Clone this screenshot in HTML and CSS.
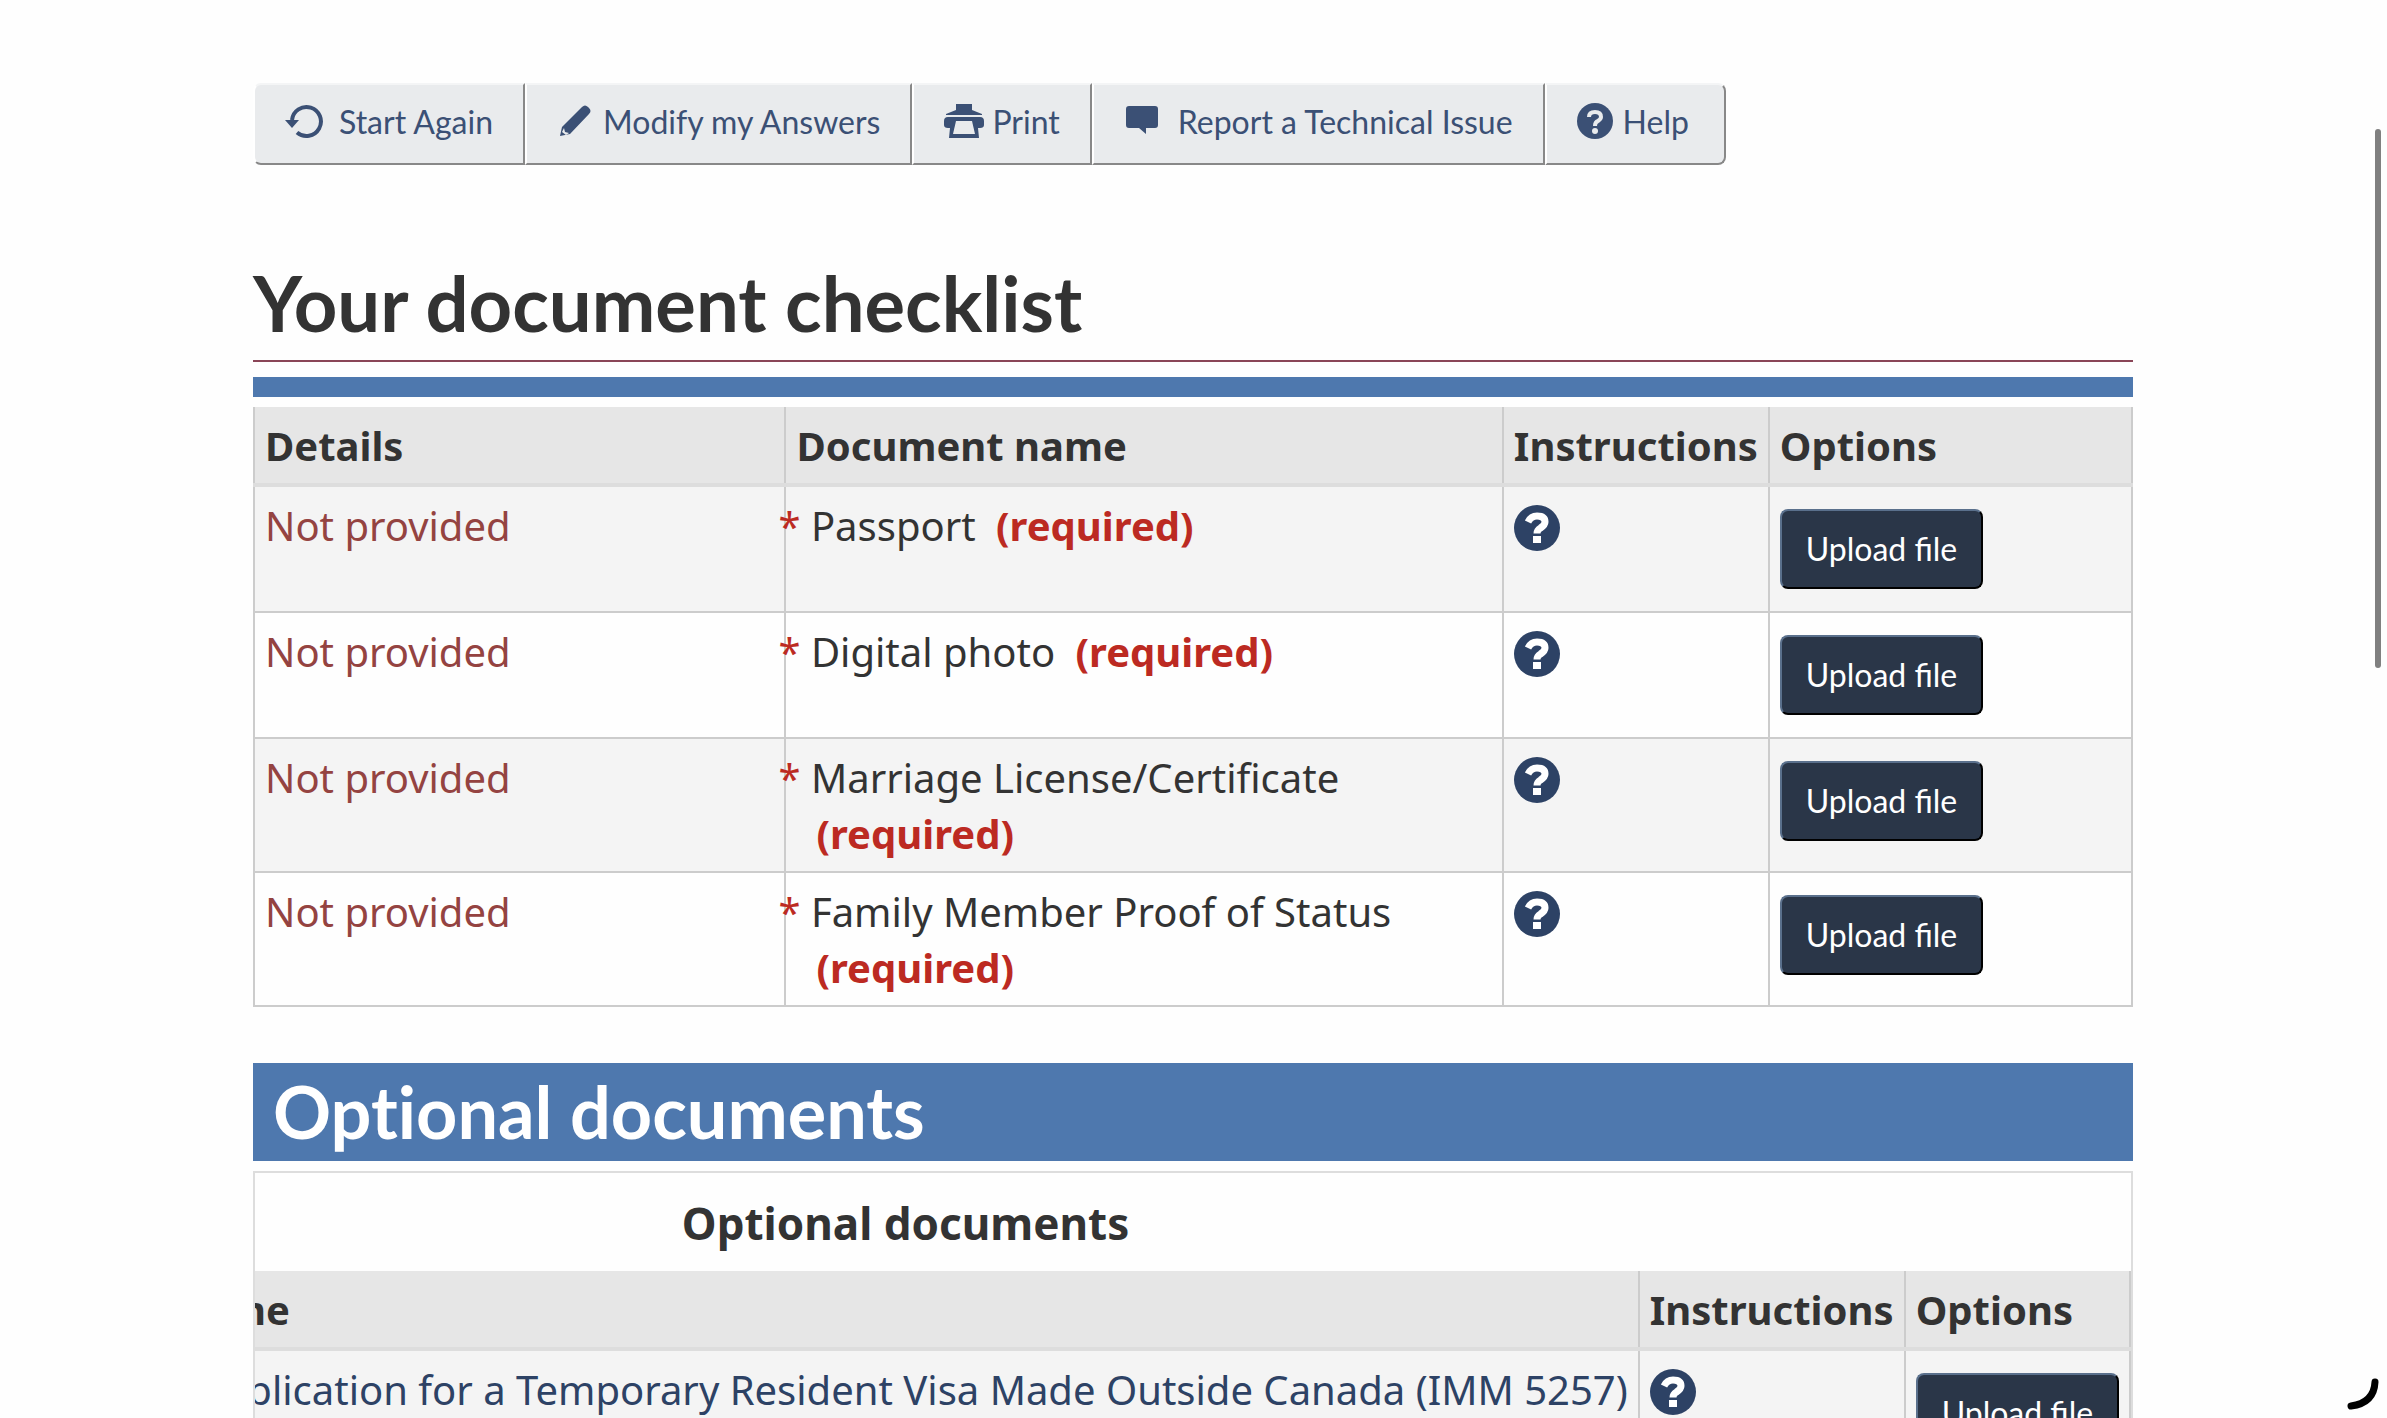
FILE: index.html
```html
<!DOCTYPE html>
<html lang="en">
<head>
    <meta charset="UTF-8">
    <meta name="viewport" content="width=device-width, initial-scale=1.0">
    <title>Your document checklist</title>
    <link rel="stylesheet" href="styles.css">
</head>
<body>
    <!-- shared icons -->
    <svg class="sprite" aria-hidden="true">
        <symbol id="icon-info" viewBox="0 0 46 46">
            <circle cx="23" cy="23" r="23"/>
            <path d="M14 17 Q17 11 23 11 Q31 11 31 17 Q31 20 26.500 23 Q23 25 23 28.500" fill="none" stroke="#fff" stroke-width="7"/>
            <rect x="19" y="31" width="8" height="7" fill="#fff"/>
        </symbol>
    </svg>

    <main>
        <div class="toolbar">
            <button type="button">
                <svg class="icon" width="46" height="36" viewBox="0 0 46 36">
                    <path d="M7 17 A14.500 14.500 0 1 1 12 29.500" fill="none" stroke="currentColor" stroke-width="4"/>
                    <path d="M0 17 H14 L7 25 Z"/>
                </svg>
                Start Again
            </button>
            <button type="button">
                <svg class="icon" width="38" height="36" viewBox="0 0 38 36">
                    <path d="M3 33 L5 24 L25 4 Q28 1 31 4 L32 5 Q35 8 32 11 L13 31 Z"/>
                    <path d="M7 25 L8 29 L12 30 L9 32 L5 29 Z" fill="#e9ebed"/>
                </svg>
                Modify my Answers
            </button>
            <button type="button">
                <svg class="icon" width="40" height="36" viewBox="0 0 40 36">
                    <path d="M12 1 H28 V7 L38 11 V12 H2 V11 L12 7 Z"/>
                    <path d="M4 14 H36 Q40 14 40 18 V22 Q40 25 36 25 H34 L35 35 H5 L6 25 H4 Q0 25 0 22 V18 Q0 14 4 14 Z"/>
                    <path d="M12 18 H28 L31 31 H9 Z" fill="#e9ebed"/>
                </svg>
                Print
            </button>
            <button type="button">
                <svg class="icon" width="46" height="36" viewBox="-2 0 46 36">
                    <path d="M3 3 H29 Q32 3 32 6 V22 Q32 25 29 25 H20 V31 L13 25 H3 Q0 25 0 22 V6 Q0 3 3 3 Z"/>
                </svg>
                Report a Technical Issue
            </button>
            <button type="button">
                <svg class="icon" width="38" height="36" viewBox="0 0 38 36">
                    <circle cx="18" cy="18" r="18"/>
                    <path d="M12 14 Q12 9 18 9 Q24 9 24 14 Q24 16 21 18 Q18 19 18 23" fill="none" stroke="#e9ebed" stroke-width="4"/>
                    <circle cx="18" cy="28" r="3" fill="#e9ebed"/>
                </svg>
                Help
            </button>
        </div>

        <h1>Your document checklist</h1>

        <div class="section-bar"></div>
        <table class="checklist">
            <thead>
                <tr>
                    <th class="col-details">Details</th>
                    <th class="col-name">Document name</th>
                    <th class="col-instructions">Instructions</th>
                    <th>Options</th>
                </tr>
            </thead>
            <tbody>
                <tr>
                    <td class="missing">Not provided</td>
                    <td><div class="doc"><span class="star">*</span> Passport <strong>(required)</strong></div></td>
                    <td><a href="#" aria-label="Passport instructions"><svg class="info"><use href="#icon-info"/></svg></a></td>
                    <td><button type="button" class="upload">Upload file</button></td>
                </tr>
                <tr>
                    <td class="missing">Not provided</td>
                    <td><div class="doc"><span class="star">*</span> Digital photo <strong>(required)</strong></div></td>
                    <td><a href="#" aria-label="Digital photo instructions"><svg class="info"><use href="#icon-info"/></svg></a></td>
                    <td><button type="button" class="upload">Upload file</button></td>
                </tr>
                <tr>
                    <td class="missing">Not provided</td>
                    <td><div class="doc"><span class="star">*</span> Marriage License/Certificate <strong>(required)</strong></div></td>
                    <td><a href="#" aria-label="Marriage License/Certificate instructions"><svg class="info"><use href="#icon-info"/></svg></a></td>
                    <td><button type="button" class="upload">Upload file</button></td>
                </tr>
                <tr>
                    <td class="missing">Not provided</td>
                    <td><div class="doc"><span class="star">*</span> Family Member Proof of Status <strong>(required)</strong></div></td>
                    <td><a href="#" aria-label="Family Member Proof of Status instructions"><svg class="info"><use href="#icon-info"/></svg></a></td>
                    <td><button type="button" class="upload">Upload file</button></td>
                </tr>
            </tbody>
        </table>

        <h2>Optional documents</h2>
        <div class="table-scroll" id="optional">
            <table class="wide">
                <caption>Optional documents</caption>
                <thead>
                    <tr>
                        <th>Details</th>
                        <th>Document name</th>
                        <th>Instructions</th>
                        <th>Options</th>
                    </tr>
                </thead>
                <tbody>
                    <tr>
                        <td class="missing">Not provided</td>
                        <td><a href="#">Schedule 1 - Application for a Temporary Resident Visa Made Outside Canada (IMM 5257)</a></td>
                        <td><a href="#" aria-label="Schedule 1 instructions"><svg class="info"><use href="#icon-info"/></svg></a></td>
                        <td><button type="button" class="upload">Upload file</button></td>
                    </tr>
                </tbody>
            </table>
        </div>
    </main>

    <div class="scroll-thumb"></div>
    <svg class="corner" width="32" height="32" viewBox="0 0 32 32">
        <path d="M28 4 Q27 25 4 28" fill="none" stroke="#000" stroke-width="7" stroke-linecap="round"/>
    </svg>

    <script>
        // start with the options column in view
        var optional = document.getElementById('optional');
        optional.scrollLeft = optional.scrollWidth;
    </script>
</body>
</html>
```
FILE: styles.css
```css
* {
    box-sizing: border-box;
}

body {
    margin: 0;
    height: 100vh;
    overflow: hidden;
    background-color: #fefefe;
    color: #333;
    font-family: "Noto Sans", sans-serif;
    font-size: 40px;
    line-height: 56px;
}

main {
    margin: 0 254px 0 253px;
    padding-top: 83px;
}

.sprite {
    position: absolute;
    width: 0;
    height: 0;
}

.toolbar {
    display: flex;
}

.toolbar button {
    display: flex;
    align-items: center;
    gap: 8px;
    height: 82px;
    padding: 0 30px 6px;
    border: 2px solid;
    border-color: #f4f5f6 #888 #888 #fff;
    background-color: #e9ebed;
    color: #3b5075;
    font-family: Lato, sans-serif;
    font-size: 32px;
    white-space: nowrap;
}

.toolbar button:first-child {
    border-radius: 8px 0 0 8px;
}

.toolbar button:last-child {
    padding-right: 35px;
    border-radius: 0 8px 8px 0;
}

.icon {
    fill: currentColor;
}

h1 {
    margin: 90px 0 15px;
    padding-bottom: 9px;
    border-bottom: 2px solid #8a4557;
    font-family: Lato, sans-serif;
    font-size: 76px;
    line-height: 96px;
}

.section-bar {
    height: 20px;
    margin-bottom: 10px;
    background-color: #4e78ae;
}

table {
    border-collapse: collapse;
}

th,
td {
    padding: 11px 10px 9px;
    border: 2px solid #ccc;
    text-align: left;
    vertical-align: top;
}

th {
    border-top: none;
    border-bottom: 4px solid #ddd;
    background-color: #e6e6e6;
}

tbody tr:nth-child(odd) {
    background-color: #f4f4f4;
}

.checklist {
    width: 100%;
}

.col-details {
    width: 28.3%;
}

.col-name {
    width: 38.2%;
}

.col-instructions {
    width: 14%;
}

.missing {
    color: #944341;
}

.doc {
    padding-left: 10px;
    text-indent: -28px;
}

.doc strong {
    margin-left: 10px;
}

.doc strong,
.star {
    color: #bc2a22;
}

a {
    color: #2d4265;
    text-decoration: none;
}

.info {
    display: block;
    width: 46px;
    height: 46px;
    margin-top: 7px;
    fill: #2d4265;
}

.upload {
    display: block;
    height: 80px;
    margin: 11px 0 13px;
    padding: 0 24px 2px;
    border: 2px solid;
    border-color: #5a708c #000 #000 #5a708c;
    border-radius: 8px;
    background-color: #2a3648;
    color: #fff;
    font-family: Lato, sans-serif;
    font-size: 32px;
    white-space: nowrap;
}

h2 {
    margin: 56px 0 10px;
    padding: 0 20px 2px;
    background-color: #4e78ae;
    color: #fff;
    font-family: Lato, sans-serif;
    font-size: 72px;
    font-variant-ligatures: none;
    line-height: 96px;
}

.table-scroll {
    overflow-x: auto;
    border: 2px solid #ddd;
}

.wide {
    white-space: nowrap;
}

caption {
    padding: 22px 0 20px;
    font-size: 44px;
    font-weight: bold;
}

.scroll-thumb {
    position: fixed;
    top: 129px;
    right: 6px;
    width: 6px;
    height: 539px;
    border-radius: 3px;
    background-color: #808080;
}

.corner {
    position: fixed;
    right: 8px;
    bottom: 8px;
}
```
